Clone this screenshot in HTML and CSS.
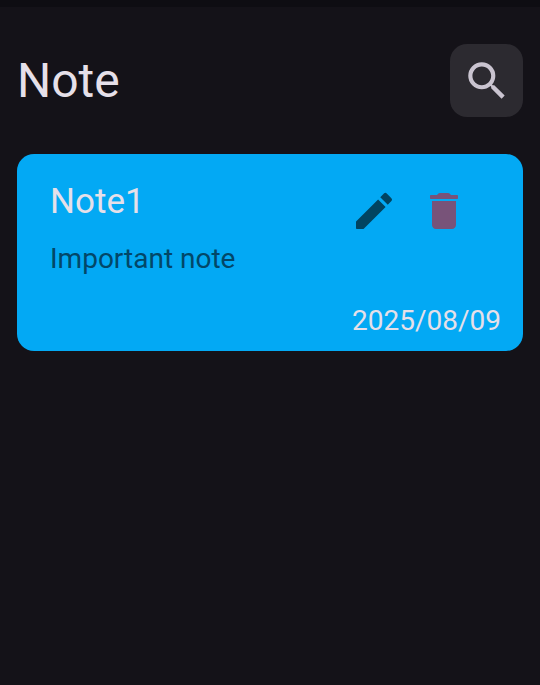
FILE: index.html
```html
<!DOCTYPE html>
<html lang="en">
<head>
<meta charset="utf-8">
<meta name="viewport" content="width=device-width, initial-scale=1">
<title>Note</title>
<link rel="stylesheet" href="styles.css">
</head>
<body>
<header class="app-bar">
  <h1 class="app-title">Note</h1>
  <button class="search-button" type="button" aria-label="Search">
    <svg class="search-icon" viewBox="0 0 24 24" aria-hidden="true"><path d="M15.5 14h-.79l-.28-.27A6.471 6.471 0 0 0 16 9.500 6.500 6.500 0 1 0 9.500 16c1.610 0 3.090-.59 4.230-1.570l.27.28v.79l5 4.990L20.490 19l-4.990-5zm-6 0C7.010 14 5 11.990 5 9.500S7.010 5 9.500 5 14 7.010 14 9.500 11.990 14 9.500 14z"/></svg>
  </button>
</header>
<main class="notes">
  <article class="note">
    <div class="note-head">
      <div class="note-text">
        <h2 class="note-title">Note1</h2>
        <p class="note-body">Important note</p>
      </div>
      <div class="note-actions">
        <button class="icon-button edit" type="button" aria-label="Edit">
          <svg viewBox="0 0 24 24" aria-hidden="true"><path d="M3 17.460V20.500c0 .28.22.5.5.5h3.040c.13 0 .26-.05.350-.15L17.810 9.940l-3.750-3.750L3.150 17.100c-.1.1-.15.22-.15.360zM20.710 7.040a.996.996 0 0 0 0-1.410l-2.340-2.340a.996.996 0 0 0-1.410 0l-1.830 1.830 3.750 3.750 1.830-1.830z"/></svg>
        </button>
        <button class="icon-button delete" type="button" aria-label="Delete">
          <svg viewBox="0 0 24 24" aria-hidden="true"><path d="M6 19c0 1.100.9 2 2 2h8c1.100 0 2-.9 2-2V7H6v12zM18.500 4h-3l-.71-.71c-.18-.18-.44-.29-.7-.29H9.910c-.26 0-.52.11-.7.29L8.500 4h-3c-.28 0-.5.22-.5.500v1c0 .28.22.5.5.500h13c.28 0 .5-.22.5-.500v-1c0-.28-.22-.5-.5-.500z"/></svg>
        </button>
      </div>
    </div>
    <time class="note-date" datetime="2025-08-09">2025/08/09</time>
  </article>
</main>
</body>
</html>
```
FILE: styles.css
```css
* {
  box-sizing: border-box;
}

body {
  margin: 0;
  min-height: 100vh;
  padding: 37px 17px 16px;
  border-top: 7px solid #0e0d12;
  background: #141218;
  color: #e6e0e9;
  font-family: Roboto, "Liberation Sans", sans-serif;
}

h1, h2, p {
  margin: 0;
  font-weight: 400;
}

button {
  display: flex;
  align-items: center;
  justify-content: center;
  padding: 0;
  border: 0;
  background: none;
  color: inherit;
}

svg {
  display: block;
  width: 48px;
  height: 48px;
  fill: currentColor;
}

.app-bar {
  display: flex;
  align-items: center;
  justify-content: space-between;
  margin-bottom: 37px;
}

.app-title {
  font-size: 48px;
  line-height: 72px;
}

.search-button {
  width: 73px;
  height: 73px;
  border-radius: 17px;
  background: #2c2a30;
  color: #cac4d0;
}

.search-icon {
  width: 50px;
  height: 50px;
}

.note {
  display: flex;
  flex-direction: column;
  padding: 24px 22px 10px 33px;
  border-radius: 17px;
  background: #03a9f4;
}

.note-head {
  display: flex;
  justify-content: space-between;
}

.note-title {
  font-size: 35px;
  line-height: 48px;
}

.note-body {
  margin-top: 13px;
  color: #024768;
  font-size: 28px;
  line-height: 40px;
}

.note-actions {
  display: flex;
  gap: 22px;
  padding: 9px 33px 0 0;
}

.icon-button {
  width: 48px;
  height: 48px;
}

.edit {
  color: #014461;
}

.delete {
  color: #785379;
}

.note-date {
  align-self: flex-end;
  margin-top: 22px;
  font-size: 28px;
  line-height: 40px;
}
```
